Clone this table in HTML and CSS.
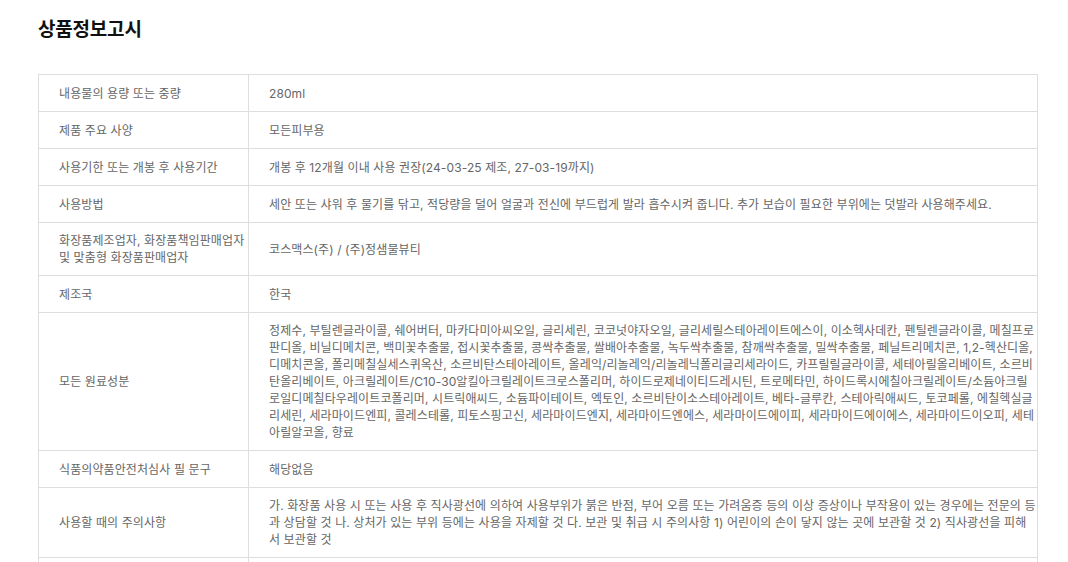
FILE: index.html
```html
<!DOCTYPE html>
<html lang="ko">
<head>
<meta charset="utf-8">
<title>상품정보고시</title>
<link rel="stylesheet" href="styles.css">
</head>
<body>
<main class="page">
  <h2 class="title">상품정보고시</h2>
  <table class="info">
    <colgroup>
      <col class="col-label">
      <col class="col-value">
    </colgroup>
    <tbody>
      <tr><th>내용물의 용량 또는 중량</th><td>280ml</td></tr>
      <tr><th>제품 주요 사양</th><td>모든피부용</td></tr>
      <tr><th>사용기한 또는 개봉 후 사용기간</th><td>개봉 후 12개월 이내 사용 권장(24-03-25 제조, 27-03-19까지)</td></tr>
      <tr><th>사용방법</th><td>세안 또는 샤워 후 물기를 닦고, 적당량을 덜어 얼굴과 전신에 부드럽게 발라 흡수시켜 줍니다. 추가 보습이 필요한 부위에는 덧발라 사용해주세요.</td></tr>
      <tr><th>화장품제조업자, 화장품책임판매업자<br>및 맞춤형 화장품판매업자</th><td>코스맥스(주) / (주)정샘물뷰티</td></tr>
      <tr><th>제조국</th><td>한국</td></tr>
      <tr><th>모든 원료성분</th><td>정제수, 부틸렌글라이콜, 쉐어버터, 마카다미아씨오일, 글리세린, 코코넛야자오일, 글리세릴스테아레이트에스이, 이소헥사데칸, 펜틸렌글라이콜, 메칠프로판디올, 비닐디메치콘, 백미꽃추출물, 접시꽃추출물, 콩싹추출물, 쌀배아추출물, 녹두싹추출물, 참깨싹추출물, 밀싹추출물, 페닐트리메치콘, 1,2-헥산디올, 디메치콘올, 폴리메칠실세스퀴옥산, 소르비탄스테아레이트, 올레익/리놀레익/리놀레닉폴리글리세라이드, 카프릴릴글라이콜, 세테아릴올리베이트, 소르비탄올리베이트, 아크릴레이트/C10-30알킬아크릴레이트크로스폴리머, 하이드로제네이티드레시틴, 트로메타민, 하이드록시에칠아크릴레이트/소듐아크릴로일디메칠타우레이트코폴리머, 시트릭애씨드, 소듐파이테이트, 엑토인, 소르비탄이소스테아레이트, 베타-글루칸, 스테아릭애씨드, 토코페롤, 에칠헥실글리세린, 세라마이드엔피, 콜레스테롤, 피토스핑고신, 세라마이드엔지, 세라마이드엔에스, 세라마이드에이피, 세라마이드에이에스, 세라마이드이오피, 세테아릴알코올, 향료</td></tr>
      <tr><th>식품의약품안전처심사 필 문구</th><td>해당없음</td></tr>
      <tr><th>사용할 때의 주의사항</th><td>가. 화장품 사용 시 또는 사용 후 직사광선에 의하여 사용부위가 붉은 반점, 부어 오름 또는 가려움증 등의 이상 증상이나 부작용이 있는 경우에는 전문의 등과 상담할 것 나. 상처가 있는 부위 등에는 사용을 자제할 것 다. 보관 및 취급 시 주의사항 1) 어린이의 손이 닿지 않는 곳에 보관할 것 2) 직사광선을 피해서 보관할 것</td></tr>
      <tr><th>품질보증기준</th><td>본 제품에 이상이 있을 경우 공정거래위원회 고시 소비자분쟁해결기준에 의거 보상해 드립니다.</td></tr>
    </tbody>
  </table>
</main>
</body>
</html>
```

FILE: styles.css
```css
html, body {
  margin: 0;
  padding: 0;
  background: #ffffff;
}

body {
  font-family: Inter, "Noto Sans CJK KR", sans-serif;
  color: #666666;
}

.page {
  padding: 17px 30px 0 38px;
}

.title {
  margin: 0 0 31px;
  font-size: 19px;
  line-height: 26px;
  font-weight: 700;
  color: #111111;
  letter-spacing: -0.2px;
}

.info {
  width: 1000px;
  border-collapse: collapse;
  table-layout: fixed;
  font-size: 12px;
  line-height: 17px;
  letter-spacing: 0.1px;
}

.col-label {
  width: 210px;
}

.info th,
.info td {
  border: 1px solid #dedede;
  padding: 9px 0 9px 20px;
  height: 18px;
  vertical-align: middle;
  text-align: left;
  font-weight: 400;
  color: #666666;
  word-break: break-all;
}
```
